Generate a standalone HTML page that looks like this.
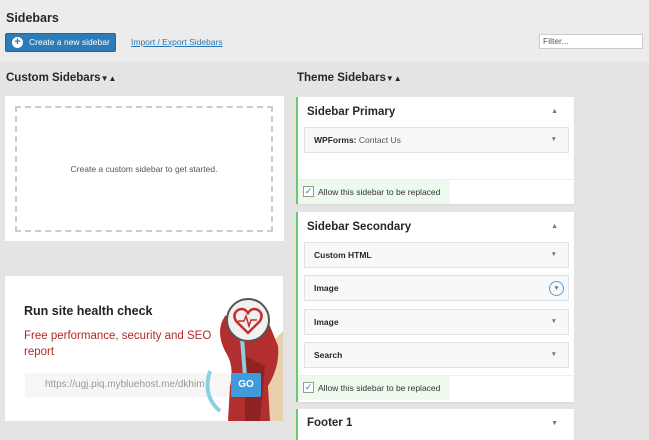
<!DOCTYPE html>
<html><head><meta charset="utf-8"><style>
*{box-sizing:border-box;margin:0;padding:0}
body{width:649px;height:440px;overflow:hidden;background:#e4e4e4;font-family:"Liberation Sans",sans-serif;color:#23282d;position:relative}
.a{position:absolute}
.top{left:0;top:0;width:649px;height:62px;background:#ececec}
.panel{background:#fff;border-left:2px solid #6bc86b;box-shadow:0 1px 1px rgba(0,0,0,.06)}
.w{position:absolute;left:6px;width:265px;height:26px;background:#f8f8f8;border:1px solid #e2e2e2;font-size:8.5px;font-weight:bold;line-height:24px;padding-left:9px;color:#23282d}
.w:after{content:"▼";position:absolute;right:11px;top:0;font-size:6.5px;color:#777}
.ck{position:absolute;left:0;width:152px;height:24px;background:#eefaee;font-size:8.5px;line-height:24px;padding-left:20px;color:#333}
.ck i{position:absolute;left:5px;top:6px;width:11px;height:11px;border:1px solid #999;background:#fff;font-style:normal;color:#1e8cbe;font-size:9px;line-height:9px;text-align:center}
.pt{position:absolute;left:9px;font-size:11.5px;font-weight:bold}
.up{position:absolute;right:16px;font-size:7px;color:#777}
</style></head><body>
<div class="a top"></div>
<div class="a" style="left:6px;top:11px;font-size:12.5px;font-weight:bold">Sidebars</div>
<div class="a" style="left:5px;top:33px;width:111px;height:19px;background:#2e7cb7;border:1px solid #23679a;border-radius:2px;color:#fff;font-size:8.5px;line-height:17px;padding-left:23px">Create a new sidebar</div>
<div class="a" style="left:12px;top:37px;width:11px;height:11px;border-radius:50%;background:#fff;color:#2e7cb7;font-size:11px;line-height:11px;text-align:center;font-weight:bold">+</div>
<div class="a" style="left:131px;top:37px;font-size:8.5px;color:#2a76b4;text-decoration:underline">Import / Export Sidebars</div>
<div class="a" style="left:539px;top:34px;width:104px;height:15px;background:#fff;border:1px solid #ccc;font-size:8.5px;line-height:13px;padding-left:3px;color:#555">Filter...</div>

<div class="a" style="left:6px;top:72px;font-size:11.5px;font-weight:bold">Custom Sidebars<span style="font-size:8px">▼▲</span></div>
<div class="a" style="left:5px;top:96px;width:279px;height:145px;background:#fff"></div>
<div class="a" style="left:15px;top:106px;width:258px;height:126px;border:2px dashed #ccc;font-size:8.5px;color:#555;text-align:center;line-height:122px">Create a custom sidebar to get started.</div>

<div class="a" style="left:5px;top:276px;width:278px;height:145px;background:#fff;overflow:hidden">
<div class="a" style="left:19px;top:28px;font-size:12.5px;font-weight:bold;color:#222">Run site health check</div>
<div class="a" style="left:19px;top:52px;width:200px;font-size:11.5px;line-height:16px;color:#b52727">Free performance, security and SEO report</div>
<div class="a" style="left:20px;top:97px;width:210px;height:24px;background:#f6f6f6;font-size:10px;color:#999;line-height:24px;padding-left:20px">https://ugj.piq.mybluehost.me/dkhim</div>
<svg class="a" style="left:195px;top:0" width="83" height="145" viewBox="0 0 83 145">
<path d="M78 60 Q60 80 50 100 L55 145 L83 145 L83 55Z" fill="#e8cfae"/>
<path d="M10 95 Q2 120 20 135" stroke="#8ccfe0" stroke-width="4" fill="none"/>
<path d="M25 40 Q15 55 25 75 Q35 90 30 110 L28 145 L70 145 L68 110 Q80 90 78 70 L70 50 Q50 30 25 40Z" fill="#b32f2f"/>
<path d="M45 80 L65 90 L60 145 L45 145Z" fill="#8e2323"/>
<path d="M42 62 L45 100" stroke="#8ccfe0" stroke-width="4"/>
<circle cx="48" cy="44" r="21" fill="#f1f1ef" stroke="#555" stroke-width="2"/>
<path d="M48 57 L36 45 Q32 38 38 34 Q44 31 48 37 Q52 31 58 34 Q64 38 60 45Z" fill="none" stroke="#c0302e" stroke-width="2.5"/>
<path d="M38 45 L44 45 L46 40 L49 50 L51 44 L57 44" fill="none" stroke="#c0302e" stroke-width="1.5"/>
</svg>
<div class="a" style="left:226px;top:97px;width:30px;height:24px;background:#3f9bdc;color:#fff;font-size:10px;font-weight:bold;text-align:center;line-height:24px;border-radius:2px">GO</div>
</div>

<div class="a" style="left:297px;top:72px;font-size:11.5px;font-weight:bold">Theme Sidebars<span style="font-size:8px">▼▲</span></div>

<div class="a panel" style="left:296px;top:97px;width:278px;height:107px">
<div class="pt" style="top:9px">Sidebar Primary</div><div class="up" style="top:11px">▲</div>
<div class="w" style="top:30px">WPForms: <span style="font-weight:normal;color:#555">Contact Us</span></div>
<div style="position:absolute;left:0;top:82px;width:276px;border-top:1px solid #eee"></div>
<div class="ck" style="top:83px"><i>✓</i>Allow this sidebar to be replaced</div>
</div>

<div class="a panel" style="left:296px;top:212px;width:278px;height:190px">
<div class="pt" style="top:9px">Sidebar Secondary</div><div class="up" style="top:11px">▲</div>
<div class="w" style="top:30px">Custom HTML</div>
<div class="w" style="top:63px">Image</div>
<div class="a" style="left:251px;top:69px;width:15px;height:15px;border:1px solid #5b9dd9;border-radius:50%;background:#f8f8f8;font-size:6.5px;color:#777;text-align:center;line-height:13px">▼</div>
<div class="w" style="top:97px">Image</div>
<div class="w" style="top:130px">Search</div>
<div style="position:absolute;left:0;top:163px;width:276px;border-top:1px solid #eee"></div>
<div class="ck" style="top:164px"><i>✓</i>Allow this sidebar to be replaced</div>
</div>

<div class="a panel" style="left:296px;top:409px;width:278px;height:31px">
<div class="pt" style="top:8px">Footer 1</div><div class="up" style="top:11px">▼</div>
</div>
</body></html>
